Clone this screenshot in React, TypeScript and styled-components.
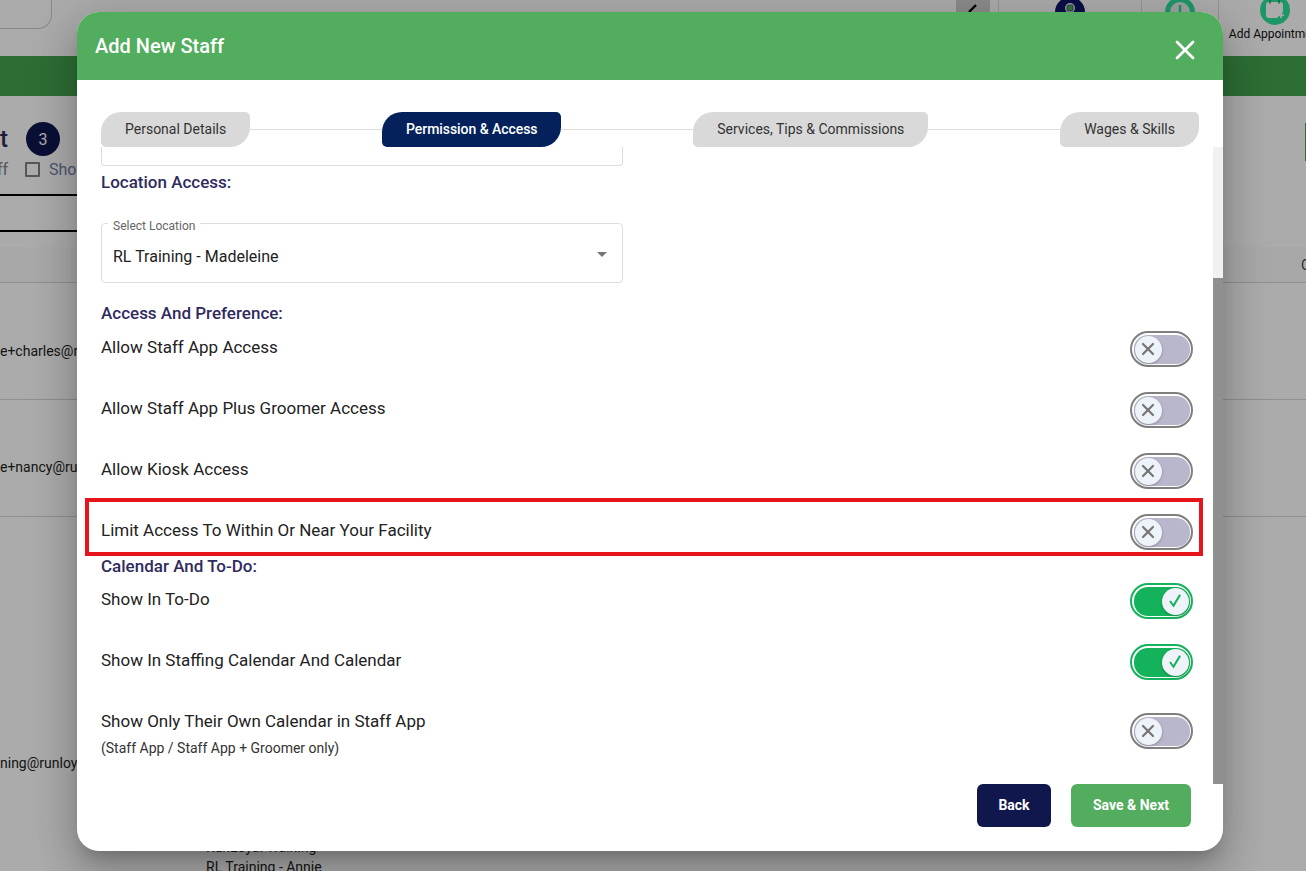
import React from "react";
import styled, { createGlobalStyle } from "styled-components";
import { X } from "lucide-react";

const Global = createGlobalStyle`
  html, body { margin: 0; padding: 0; background: #fff; }
  * { box-sizing: border-box; }
  body { font-family: Roboto, "Liberation Sans", sans-serif; color: #222; }
`;

const Page = styled.div`
  position: relative;
  width: 1306px;
  height: 871px;
  overflow: hidden;
  background: #fff;
`;

/* ---------- page behind the dialog ---------- */
const TopBar = styled.header`
  display: flex;
  justify-content: space-between;
  height: 56px;
`;
const SearchField = styled.div`
  width: 52px;
  height: 29px;
  border: 1px solid #ccc;
  border-top: none;
  border-left: none;
  border-bottom-right-radius: 14px;
`;
const TopActions = styled.div`
  display: flex;
  height: 56px;
`;
const EditBox = styled.div`
  width: 34px;
  height: 24px;
  margin-right: 8px;
  background: #cfcfcf;
  display: flex;
  justify-content: center;
`;
const TopAction = styled.div<{ $w: number }>`
  width: ${(p) => p.$w}px;
  border-left: 1px solid #ddd;
  display: flex;
  flex-direction: column;
  align-items: center;
`;
const TopCircle = styled.div<{ $bg: string; $top: number }>`
  width: 30px;
  height: 30px;
  margin-top: ${(p) => p.$top}px;
  border-radius: 50%;
  background: ${(p) => p.$bg};
  display: flex;
  align-items: center;
  justify-content: center;
  flex-shrink: 0;
`;
const AppointmentAction = styled.div`
  width: 88px;
  border-left: 1px solid #ddd;
  padding-left: 10px;
`;
const AppointmentInner = styled.div`
  display: flex;
  flex-direction: column;
  align-items: center;
  width: 92px;
`;
const TopLabel = styled.span`
  font-size: 12px;
  line-height: 16px;
  margin: 1px 0 0 1px;
  white-space: nowrap;
  color: #111;
`;
const GreenBar = styled.div`
  height: 40px;
  background: #44a550;
`;
const StaffHead = styled.section`
  height: 151px;
  padding-top: 26px;
`;
const HeadRow = styled.div`
  display: flex;
  align-items: center;
  height: 34px;
`;
const HeadTitle = styled.span`
  width: 26px;
  font-size: 24px;
  font-weight: 500;
  color: #2f2b5e;
`;
const CountBadge = styled.span`
  width: 34px;
  height: 34px;
  border-radius: 50%;
  background: #0f174f;
  color: #fff;
  font-size: 16px;
  display: flex;
  align-items: center;
  justify-content: center;
`;
const HeadButton = styled.div`
  width: 60px;
  height: 38px;
  margin-top: 6px;
  margin-left: auto;
  margin-right: -59px;
  flex-shrink: 0;
  background: #44a550;
`;
const FilterRow = styled.div`
  display: flex;
  align-items: center;
  height: 26px;
  font-size: 16px;
  color: #6f80a8;
`;
const FilterClip = styled.span`
  width: 25px;
  margin-left: -3px;
  margin-right: 3px;
  color: #808080;
`;
const FilterBox = styled.span`
  width: 15px;
  height: 15px;
  border: 2px solid #808080;
  border-radius: 1px;
  margin-right: 9px;
`;
const TabStrip = styled.div`
  width: 640px;
  height: 38px;
  margin-top: 12px;
  border-top: 2px solid #000;
  border-bottom: 2px solid #000;
`;
const TableHead = styled.div`
  height: 36px;
  background: #fbfbfb;
  border-bottom: 1px solid #d6d6d6;
  display: flex;
  align-items: center;
  justify-content: flex-end;
  font-size: 14px;
  color: #444;
`;
const HeadCell = styled.span`
  width: 5px;
`;
const TableRow = styled.div<{ $top: number }>`
  height: 117px;
  padding-top: ${(p) => p.$top}px;
  border-bottom: 1px solid #d6d6d6;
  font-size: 14px;
  line-height: 20px;
  color: #222;
`;
const LastRow = styled.div`
  display: grid;
  grid-template-columns: 206px 1fr;
  font-size: 14px;
  line-height: 20px;
  color: #222;
`;
const EmailCell = styled.div`
  padding-top: 236px;
`;
const LocationCell = styled.div`
  padding-top: 320px;
`;

/* ---------- dialog ---------- */
const Backdrop = styled.div`
  position: absolute;
  inset: 0;
  background: rgba(0, 0, 0, 0.33);
`;
const Dialog = styled.div`
  position: absolute;
  left: 77px;
  top: 12px;
  width: 1146px;
  height: 839px;
  display: flex;
  flex-direction: column;
  background: #fff;
  border-radius: 22px;
  overflow: hidden;
`;
const DialogShadow = styled.div`
  position: absolute;
  left: 77px;
  top: 12px;
  width: 1146px;
  height: 839px;
  border-radius: 22px;
  box-shadow: 0 11px 15px -7px rgba(0, 0, 0, 0.2), 0 24px 38px 3px rgba(0, 0, 0, 0.14),
    0 9px 46px 8px rgba(0, 0, 0, 0.12);
`;
const DialogHeader = styled.div`
  height: 68px;
  flex-shrink: 0;
  background: #52ad5e;
  display: flex;
  align-items: center;
  justify-content: space-between;
  padding: 0 22px 0 18px;
  color: #fff;
`;
const DialogTitle = styled.h2`
  margin: 0 0 1px;
  font-size: 20px;
  font-weight: 500;
`;
const CloseButton = styled.button`
  border: none;
  background: none;
  padding: 0;
  margin-top: 8px;
  color: #fff;
  display: flex;
`;
const Stepper = styled.nav`
  display: flex;
  align-items: center;
  flex-shrink: 0;
  margin: 32px 24px 0;
  height: 35px;
`;
const Step = styled.div<{ $active?: boolean }>`
  height: 35px;
  padding: 0 24px 2px;
  display: flex;
  align-items: center;
  font-size: 14px;
  font-weight: ${(p) => (p.$active ? 500 : 400)};
  letter-spacing: ${(p) => (p.$active ? "-0.004em" : "0")};
  color: ${(p) => (p.$active ? "#fff" : "#333")};
  background: ${(p) => (p.$active ? "#04215c" : "#d9d9d9")};
  border-radius: 20px 5px 20px 5px;
  white-space: nowrap;
`;
const StepLine = styled.div`
  flex: 1;
  height: 1px;
  margin-top: -1px;
  background: #ddd;
`;
const ScrollArea = styled.div`
  flex: 1;
  min-height: 0;
  display: flex;
`;
const ScrollContent = styled.div`
  flex: 1;
  padding: 0 20px 0 24px;
  overflow: hidden;
`;
const Scrollbar = styled.div`
  width: 10px;
  background: #f1f1f1;
  padding-top: 131px;
`;
const ScrollThumb = styled.div`
  height: 100%;
  background: #8f8f8f;
`;
const ClippedField = styled.div`
  width: 522px;
  height: 19px;
  border: 1px solid #ddd;
  border-top: none;
  border-radius: 0 0 4px 4px;
`;
const SectionTitle = styled.h3<{ $top: number }>`
  margin: ${(p) => p.$top}px 0 0;
  padding-bottom: 2px;
  font-size: 17px;
  line-height: 22px;
  font-weight: 500;
  color: #2f2b5e;
`;
const SelectField = styled.fieldset`
  width: 522px;
  height: 64px;
  margin: 24px 0 0;
  padding: 0 8px 0 11px;
  border: 1px solid #ddd;
  border-radius: 4px;
`;
const SelectLegend = styled.legend`
  height: 8px;
  padding: 0 5px;
  margin-left: -5px;
  font-size: 12px;
  line-height: 14px;
  color: #666;
`;
const SelectRow = styled.div`
  display: flex;
  justify-content: space-between;
  margin-top: 15px;
  height: 24px;
`;
const SelectValue = styled.span`
  margin-top: 3px;
  font-size: 16px;
  line-height: 24px;
  color: #222;
`;
const OptionRow = styled.div<{ $h?: number; $top?: number }>`
  display: flex;
  justify-content: space-between;
  align-items: flex-start;
  height: ${(p) => p.$h ?? 61}px;
  margin-top: ${(p) => p.$top ?? 0}px;
`;
const OptionText = styled.div`
  margin-top: 3px;
  font-size: 17px;
  line-height: 24px;
  color: #222;
`;
const OptionNote = styled.div`
  margin-top: 5px;
  font-size: 14px;
  line-height: 20px;
  color: #333;
`;
const ToggleRing = styled.div<{ $on?: boolean; $drop?: number }>`
  width: 63px;
  height: 36px;
  margin-top: ${(p) => p.$drop ?? -1}px;
  flex-shrink: 0;
  padding: 1.5px;
  border-radius: 18px;
  border: 2.5px solid ${(p) => (p.$on ? "#14b25a" : "#7f7f7f")};
  background: #fff;
`;
const ToggleTrack = styled.div<{ $on?: boolean }>`
  height: 100%;
  border-radius: 14px;
  padding: 0 1px;
  display: flex;
  align-items: center;
  justify-content: ${(p) => (p.$on ? "flex-end" : "flex-start")};
  background: ${(p) => (p.$on ? "#14b25a" : "#b9b7cc")};
`;
const ToggleThumb = styled.div`
  width: 27px;
  height: 27px;
  border-radius: 50%;
  background: #eef3f9;
  color: #757575;
  box-shadow: 0 1px 3px rgba(0, 0, 0, 0.25);
  display: flex;
  align-items: center;
  justify-content: center;
`;
const DialogFooter = styled.div`
  height: 67px;
  flex-shrink: 0;
  display: flex;
  justify-content: flex-end;
  gap: 20px;
  padding-right: 32px;
`;
const ActionButton = styled.button<{ $w: number; $bg: string }>`
  width: ${(p) => p.$w}px;
  height: 43px;
  padding: 0 0 2px;
  border: none;
  border-radius: 6px;
  background: ${(p) => p.$bg};
  color: #fff;
  font-family: inherit;
  font-size: 14px;
  font-weight: 700;
`;
const Highlight = styled.div`
  position: absolute;
  left: 85px;
  top: 498px;
  width: 1118px;
  height: 58px;
  border: 4px solid #e8141c;
`;

const Toggle = ({ on, drop }: { on?: boolean; drop?: number }) => (
  <ToggleRing $on={on} $drop={drop}>
    <ToggleTrack $on={on}>
      <ToggleThumb>
        {on ? (
          <svg width="16" height="16" viewBox="0 0 16 16">
            <path d="M2.2 8.6 L3.8 7.6 L6.3 11 L12.2 1.2 L14 2.3 L6.6 14.6 Z" fill="#14b25a" />
          </svg>
        ) : (
          <X size={20} strokeWidth={2.6} />
        )}
      </ToggleThumb>
    </ToggleTrack>
  </ToggleRing>
);

export default function App() {
  return (
    <Page>
      <Global />
      <TopBar>
        <SearchField />
        <TopActions>
          <EditBox>
            <svg width="20" height="16" viewBox="0 0 20 16">
              <path d="M6 12 L13 5" stroke="#000" strokeWidth="2.4" />
            </svg>
          </EditBox>
          <TopAction $w={143}>
            <TopCircle $bg="#10186a" $top={-3}>
              <svg width="24" height="24" viewBox="0 0 24 24">
                <circle cx="12" cy="8" r="5" fill="#e6ecea" />
                <rect x="9" y="5" width="6" height="6" rx="1.5" fill="#52ad5e" stroke="#10186a" strokeWidth="0.6" />
              </svg>
            </TopCircle>
          </TopAction>
          <TopAction $w={77}>
            <TopCircle $bg="#2ee29a" $top={-3}>
              <svg width="24" height="24" viewBox="0 0 24 24">
                <circle cx="12" cy="12" r="10" fill="#eaf4f0" />
                <path d="M12 5 V13 L16 16" stroke="#2ee29a" strokeWidth="2.4" fill="none" />
              </svg>
            </TopCircle>
          </TopAction>
          <AppointmentAction>
            <AppointmentInner>
              <TopCircle $bg="#2ee29a" $top={-5}>
                <svg width="20" height="20" viewBox="0 0 20 20">
                  <path d="M1 5 Q1 2 4 2 H15 Q18 2 18 5 V12 L12 18 H4 Q1 18 1 15 Z" fill="#fff" />
                  <path d="M5 0 V3.5 M14 0 V3.5" stroke="#1c9966" strokeWidth="1.5" />
                  <path d="M16 12.5 V18 M13.2 15.2 H18.8" stroke="#fff" strokeWidth="1.7" />
                </svg>
              </TopCircle>
              <TopLabel>Add Appointment</TopLabel>
            </AppointmentInner>
          </AppointmentAction>
        </TopActions>
      </TopBar>
      <GreenBar />
      <StaffHead>
        <HeadRow>
          <HeadTitle>t</HeadTitle>
          <CountBadge>3</CountBadge>
          <HeadButton />
        </HeadRow>
        <FilterRow>
          <FilterClip>ff</FilterClip>
          <FilterBox />
          Show
        </FilterRow>
        <TabStrip />
      </StaffHead>
      <TableHead>
        <HeadCell>C</HeadCell>
      </TableHead>
      <TableRow $top={58}>e+charles@runloyal.com</TableRow>
      <TableRow $top={57}>e+nancy@runloyal.com</TableRow>
      <LastRow>
        <EmailCell>ning@runloyal.com</EmailCell>
        <LocationCell>
          <div>RunLoyal Training</div>
          <div>RL Training - Annie</div>
        </LocationCell>
      </LastRow>

      <Backdrop />
      <DialogShadow />
      <Dialog>
        <DialogHeader>
          <DialogTitle>Add New Staff</DialogTitle>
          <CloseButton aria-label="Close">
            <X size={32} strokeWidth={2.1} />
          </CloseButton>
        </DialogHeader>
        <Stepper>
          <Step>Personal Details</Step>
          <StepLine />
          <Step $active>Permission &amp; Access</Step>
          <StepLine />
          <Step>Services, Tips &amp; Commissions</Step>
          <StepLine />
          <Step>Wages &amp; Skills</Step>
        </Stepper>
        <ScrollArea>
          <ScrollContent>
            <ClippedField />
            <SectionTitle $top={5}>Location Access:</SectionTitle>
            <SelectField>
              <SelectLegend>Select Location</SelectLegend>
              <SelectRow>
                <SelectValue>RL Training - Madeleine</SelectValue>
                <svg width="24" height="24" viewBox="0 0 24 24">
                  <path d="M7 10l5 5 5-5z" fill="#757575" />
                </svg>
              </SelectRow>
            </SelectField>
            <SectionTitle $top={19}>Access And Preference:</SectionTitle>
            <OptionRow $top={6}>
              <OptionText>Allow Staff App Access</OptionText>
              <Toggle />
            </OptionRow>
            <OptionRow>
              <OptionText>Allow Staff App Plus Groomer Access</OptionText>
              <Toggle />
            </OptionRow>
            <OptionRow>
              <OptionText>Allow Kiosk Access</OptionText>
              <Toggle />
            </OptionRow>
            <OptionRow $h={40}>
              <OptionText>Limit Access To Within Or Near Your Facility</OptionText>
              <Toggle />
            </OptionRow>
            <SectionTitle $top={0}>Calendar And To-Do:</SectionTitle>
            <OptionRow $top={5}>
              <OptionText>Show In To-Do</OptionText>
              <Toggle on />
            </OptionRow>
            <OptionRow>
              <OptionText>Show In Staffing Calendar And Calendar</OptionText>
              <Toggle on />
            </OptionRow>
            <OptionRow>
              <OptionText>
                Show Only Their Own Calendar in Staff App
                <OptionNote>(Staff App / Staff App + Groomer only)</OptionNote>
              </OptionText>
              <Toggle drop={7} />
            </OptionRow>
          </ScrollContent>
          <Scrollbar>
            <ScrollThumb />
          </Scrollbar>
        </ScrollArea>
        <DialogFooter>
          <ActionButton $w={74} $bg="#0f174d">Back</ActionButton>
          <ActionButton $w={120} $bg="#52ad5e">Save &amp; Next</ActionButton>
        </DialogFooter>
      </Dialog>
      <Highlight />
    </Page>
  );
}
